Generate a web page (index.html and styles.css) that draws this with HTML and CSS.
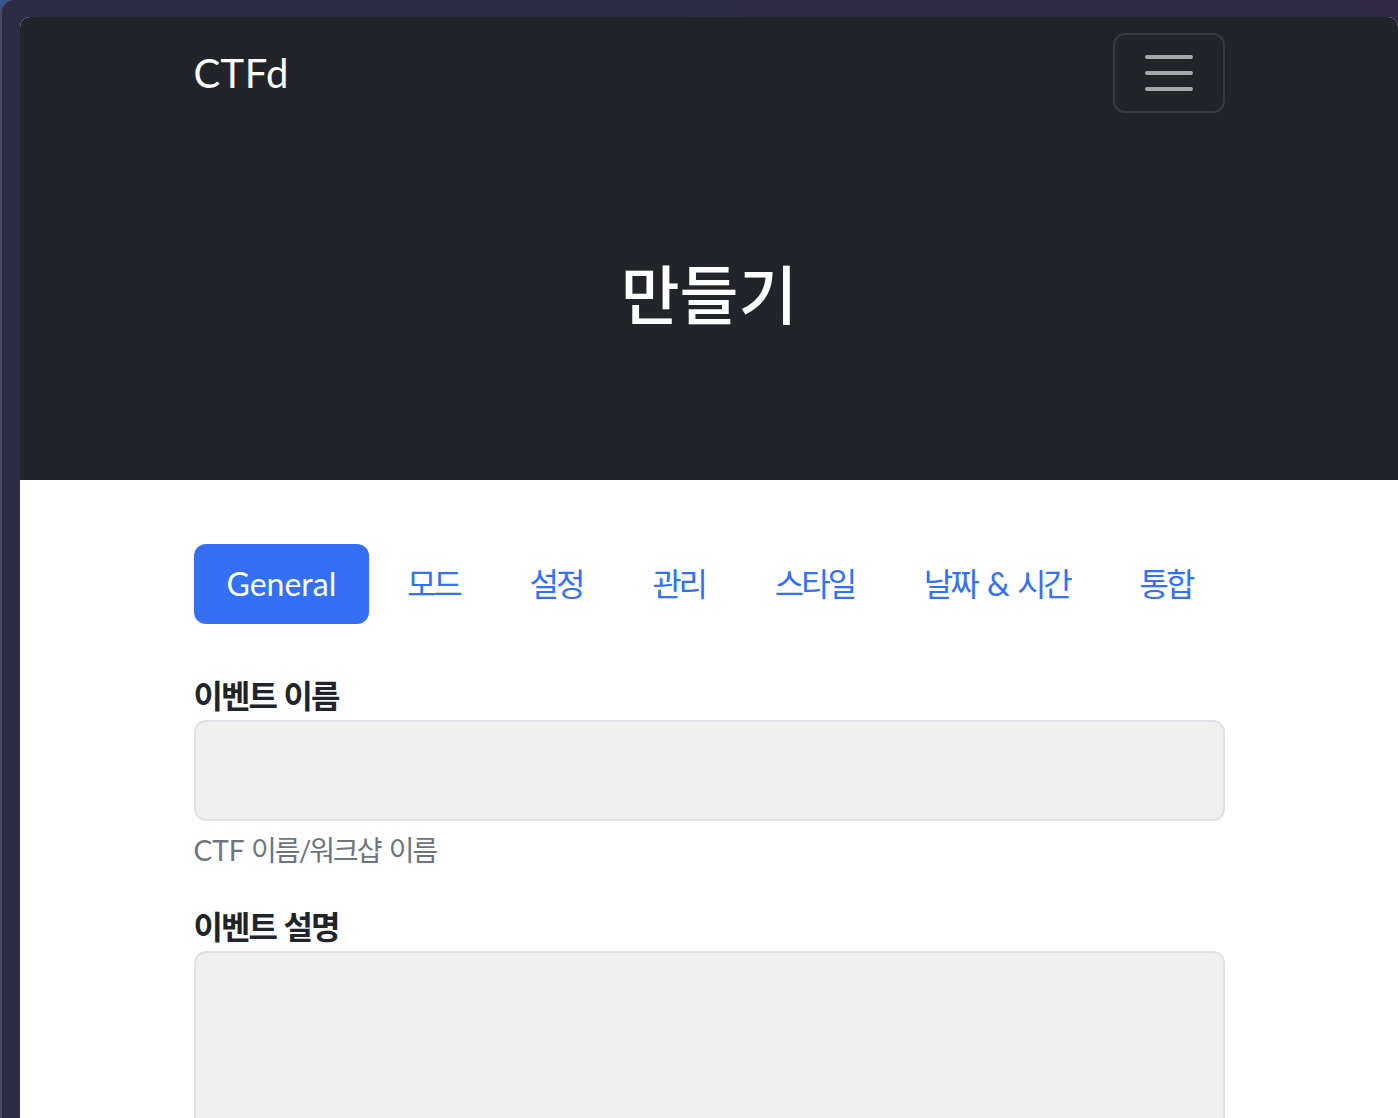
FILE: index.html
```html
<!DOCTYPE html>
<html lang="ko">
<head>
<meta charset="utf-8">
<title>CTFd 설정</title>
<link rel="stylesheet" href="styles.css">
</head>
<body>
<div class="frame">
  <div class="window">
    <header class="hero">
      <nav class="navbar">
        <div class="container nav-row">
          <span class="brand">CTFd</span>
          <button class="toggler" type="button" aria-label="menu">
            <span class="bar"></span><span class="bar"></span><span class="bar"></span>
          </button>
        </div>
      </nav>
      <div class="jumbotron">
        <h1 class="title">만들기</h1>
      </div>
    </header>
    <main class="container main">
      <ul class="tabs">
        <li><a class="tab active">General</a></li>
        <li><a class="tab">모드</a></li>
        <li><a class="tab">설정</a></li>
        <li><a class="tab">관리</a></li>
        <li><a class="tab">스타일</a></li>
        <li><a class="tab">날짜 &amp; 시간</a></li>
        <li><a class="tab">통합</a></li>
      </ul>
      <div class="group">
        <label class="label">이벤트 이름</label>
        <div class="input"></div>
        <div class="help">CTF <span class="ko">이름/워크샵 이름</span></div>
      </div>
      <div class="group">
        <label class="label">이벤트 설명</label>
        <div class="input textarea"></div>
      </div>
    </main>
  </div>
</div>
</body>
</html>
```

FILE: styles.css
```css
html {
  background: #3a5690;
}
body {
  margin: 0;
  height: 1118px;
  overflow: hidden;
  font-family: Lato, "Noto Sans CJK KR", sans-serif;
}
.frame {
  height: 100%;
  box-sizing: border-box;
  background: linear-gradient(90deg, #2c2c44 0%, #302a44 100%);
  border-left: 2px solid #4b4960;
  border-top-left-radius: 14px;
  padding: 17px 0 0 18px;
}
.window {
  height: 100%;
  background: #fff;
  border-radius: 10px 10px 0 0;
  overflow: hidden;
}
.hero {
  background: #212529;
}
.container {
  max-width: 1079px;
  margin: 0 auto;
  padding: 0 24px;
  box-sizing: border-box;
}
.navbar {
  padding: 16px 0;
}
.nav-row {
  display: flex;
  justify-content: space-between;
  align-items: center;
}
.brand {
  color: #fff;
  font-size: 40px;
  line-height: 60px;
  padding: 10px 0;
  letter-spacing: 0.4px;
}
.toggler {
  width: 112px;
  height: 80px;
  box-sizing: border-box;
  background: transparent;
  border: 2px solid rgba(255, 255, 255, 0.1);
  border-radius: 12px;
  display: flex;
  flex-direction: column;
  align-items: center;
  justify-content: center;
  gap: 12px;
  padding: 0;
}
.bar {
  display: block;
  width: 48px;
  height: 4px;
  border-radius: 2px;
  background: #a6a7a9;
}
.jumbotron {
  height: 351px;
  display: flex;
  align-items: center;
  justify-content: center;
  padding-bottom: 26px;
  box-sizing: border-box;
}
.title {
  margin: 0;
  color: #fff;
  font-family: "Noto Sans CJK KR", sans-serif;
  font-size: 64px;
  font-weight: 500;
  line-height: 1.2;
}
.main {
  padding-top: 64px;
}
.tabs {
  list-style: none;
  margin: 0 0 48px;
  padding: 0;
  display: flex;
  justify-content: space-between;
  white-space: nowrap;
}
.tabs li {
  flex: none;
}
.tab {
  display: block;
  padding: 16px 32px;
  font-size: 32px;
  line-height: 48px;
  color: #3370f5;
  border-radius: 12px;
  letter-spacing: -3px;
  word-spacing: 5px;
}
.tab.active {
  background: #3370f5;
  color: #fff;
  letter-spacing: 0;
  padding: 16px 33px;
}
.group {
  margin-bottom: 32px;
}
.label {
  display: block;
  font-size: 32px;
  font-weight: 700;
  line-height: 48px;
  color: #212529;
  letter-spacing: -2px;
  word-spacing: 2px;
}
.input {
  height: 101px;
  box-sizing: border-box;
  background: #f0f0f0;
  border: 2px solid #dee2e6;
  border-radius: 12px;
}
.textarea {
  height: 300px;
}
.help {
  margin-top: 8px;
  font-size: 28px;
  line-height: 42px;
  color: #6c757d;
}
.help .ko {
  letter-spacing: -2px;
  word-spacing: 3px;
}
```
